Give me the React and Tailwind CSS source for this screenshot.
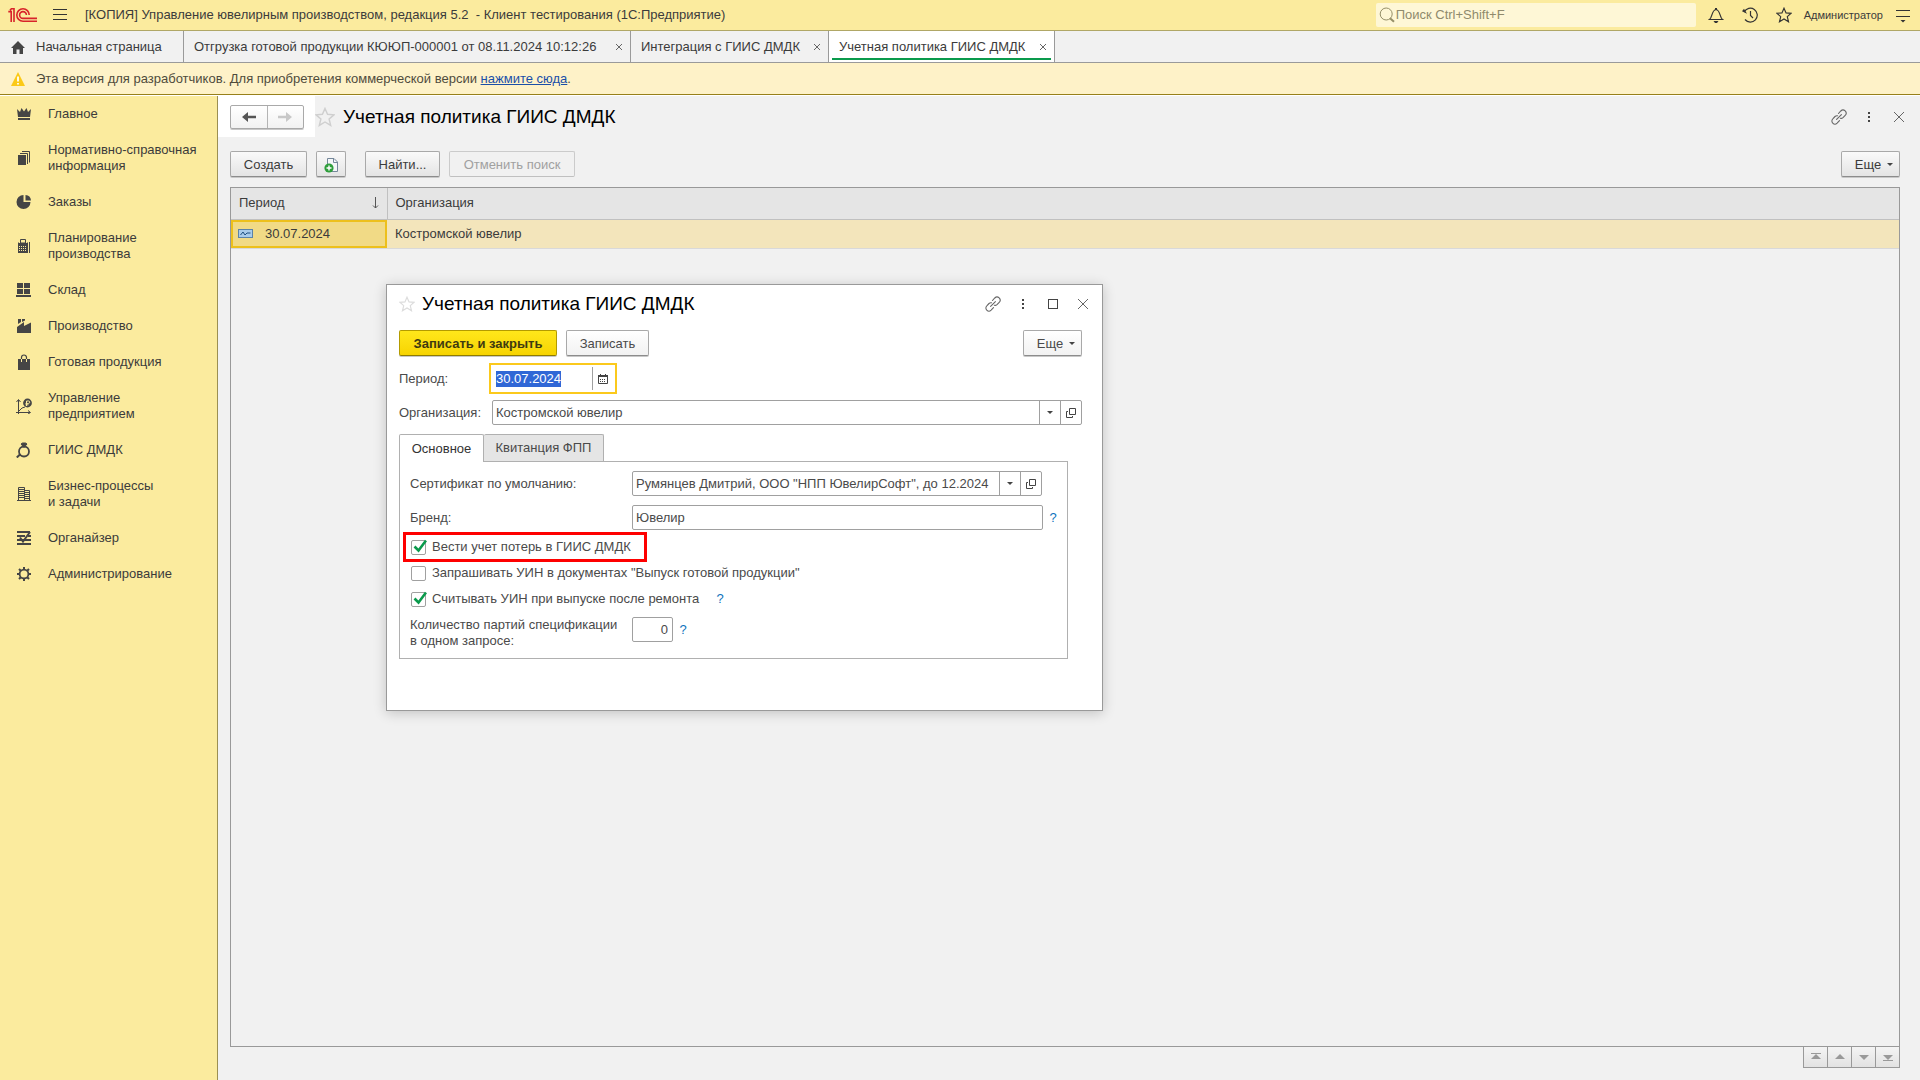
import { useEffect, useRef } from "react"
import clsx from "clsx"

/* ---------- icons ---------- */

const Svg = ({ w = 16, h = 16, className, children }) => (
  <svg width={w} height={h} viewBox={`0 0 ${w} ${h}`} fill="none" className={clsx("shrink-0", className)} aria-hidden="true">
    {children}
  </svg>
)

const Logo = () => (
  <Svg w={30} h={16} className="text-[#d8232a]">
    <g stroke="currentColor" strokeWidth="1.6">
      <path d="M0.3 4.6 H3.2 V15 M2 3.4 L3.4 1.8 H6 V15" />
      <path d="M21.2 8 A6.2 6.2 0 1 0 15 14.2 H29" />
      <path d="M18.4 8 A3.4 3.4 0 1 0 15 11.4 H29" />
    </g>
  </Svg>
)

const HomeIcon = () => (
  <Svg>
    <path d="M8 2 L15 9 H13 V15 H9.5 V10.5 H6.5 V15 H3 V9 H1 Z" fill="#454545" />
  </Svg>
)

const WarningIcon = () => (
  <Svg>
    <path d="M8 1 L15 15 H1 Z" fill="#fbc917" />
    <path d="M8 5.5 V10.5 M8 12 V13.6" stroke="#fff" strokeWidth="1.8" />
  </Svg>
)

const StarIcon = ({ size = 18, className }) => (
  <svg width={size} height={size} viewBox="0 0 18 18" fill="none" className={clsx("shrink-0", className)} aria-hidden="true">
    <path
      d="M9 1.3 L11.3 6.6 L17 7.1 L12.7 10.8 L14.1 16.6 L9 13.5 L3.9 16.6 L5.3 10.8 L1 7.1 L6.7 6.6 Z"
      stroke="currentColor"
      strokeWidth="1.3"
    />
  </svg>
)

const SearchIcon = () => (
  <Svg className="text-[#958f68]">
    <circle cx="7.2" cy="7" r="6" stroke="currentColor" />
    <path d="M11 11.2 L15 14.8" stroke="currentColor" strokeWidth="2" />
  </Svg>
)

const BellIcon = () => (
  <Svg>
    <path d="M1.5 12.5 C4.5 10.5 3.5 3 8 2.5 C12.5 3 11.5 10.5 14.5 12.5 Z" stroke="#333" strokeWidth="1.2" />
    <path d="M7 1 H9 V3 H7 Z M5.5 14 H10.5 L9 16 H7 Z" fill="#333" />
  </Svg>
)

const HistoryIcon = () => (
  <Svg>
    <path d="M2.2 5 A6.9 6.9 0 1 1 3 12.5" stroke="#333" strokeWidth="1.2" />
    <path d="M0 4.2 L5 6.8 L2 1.8 Z" fill="#333" />
    <path d="M8.5 4 V8.5 L11 11" stroke="#333" strokeWidth="1.2" />
  </Svg>
)

const ServiceIcon = () => (
  <Svg>
    <path d="M1 3.5 H15 M1 9.5 H15" stroke="#333" />
    <path d="M5.5 13 H10.5 L8 15.5 Z" fill="#333" />
  </Svg>
)

const LinkIcon = () => (
  <Svg>
    <g stroke="#666" strokeWidth="1.1" strokeLinecap="round">
      <path d="M7.5 4.5 L9.8 2 A3 3 0 0 1 14.2 6.3 L12 8.7 A3 3 0 0 1 9.3 9.3" />
      <path d="M6.5 6.8 A3 3 0 0 0 4 7.5 L1.8 9.8 A3 3 0 0 0 6.1 14.2 L8.5 11.7" />
      <path d="M5.6 10.4 L10.4 5.6" />
    </g>
  </Svg>
)

const DotsIcon = () => (
  <Svg>
    <path d="M7 3 H9 V5 H7 Z M7 7 H9 V9 H7 Z M7 11 H9 V13 H7 Z" fill="#444" />
  </Svg>
)

const SquareIcon = () => (
  <Svg>
    <rect x="3.5" y="3.5" width="9" height="9" stroke="#444" />
  </Svg>
)

const CloseIcon = () => (
  <Svg>
    <path d="M3 3 L13 13 M13 3 L3 13" stroke="#666" />
  </Svg>
)

const TabCloseIcon = () => (
  <Svg w={8} h={8}>
    <path d="M1 1 L7 7 M7 1 L1 7" stroke="#666" />
  </Svg>
)

const ArrowIcon = ({ className }) => (
  <Svg className={className}>
    <path d="M1 8 L7 3 V6.8 H15 V9.2 H7 V13 Z" fill="currentColor" />
  </Svg>
)

const CaretIcon = () => (
  <Svg w={6} h={3}>
    <path d="M0 0 H6 L3 3 Z" fill="#444" />
  </Svg>
)

const OpenIcon = () => (
  <Svg w={10} h={10}>
    <path d="M3.5 0.5 H9.5 V6.5 H3.5 Z M2 3.5 H0.5 V9.5 H6.5 V8" stroke="#444" />
  </Svg>
)

const CalendarIcon = () => (
  <Svg w={10} h={10}>
    <path d="M0.5 1.5 H9.5 V9.5 H0.5 Z" stroke="#444" />
    <path d="M0 1 H10 V3 H0 Z M2 0 H3 V1 H2 Z M7 0 H8 V1 H7 Z" fill="#444" />
    <path d="M2 5.5 H8 M2 7.5 H8" stroke="#444" strokeDasharray="1 1" />
  </Svg>
)

const CopyDocIcon = () => (
  <Svg>
    <path d="M4.5 1.5 H11 L14.5 5 V14.5 H4.5 Z" fill="#f4f6f8" stroke="#74879a" />
    <path d="M10.5 1.5 V5.5 H14.5" stroke="#74879a" />
    <circle cx="6" cy="11" r="4.6" fill="#2f9e3c" />
    <path d="M3.5 11 H8.5 M6 8.5 V13.5" stroke="#fff" strokeWidth="1.4" />
  </Svg>
)

const RecordIcon = () => (
  <Svg w={15} h={9}>
    <rect x="0.5" y="0.5" width="14" height="8" fill="#a9cbea" stroke="#5c83a8" />
    <path d="M2.5 6 L5 3 L7 6 L9 4 L12.5 4" stroke="#1f4f80" />
  </Svg>
)

const SortIcon = () => (
  <Svg w={8} h={12}>
    <path d="M4.5 0 V11 M2 8.5 L4.5 11 L7 8.5" stroke="#555" />
  </Svg>
)

const menuIcons = {
  crown: (
    <path d="M1 3 L4 6 L5.5 2 L8 5.5 L10.5 2 L12 6 L15 3 L14 11 H2 Z M2 12 H14 V14 H2 Z" fill="#454545" />
  ),
  docs: (
    <>
      <path d="M2 5 H10 V15 H2 Z" fill="#454545" />
      <path d="M4 3.5 H11.5 V14 M6 1.5 H13.5 V12.5" stroke="#454545" />
    </>
  ),
  pie: (
    <path d="M7.5 1 V8 H14.5 A7 7 0 1 1 7.5 1 Z M9.5 1 A6 6 0 0 1 15 6.5 H9.5 Z" fill="#454545" />
  ),
  calc: (
    <>
      <path d="M4.5 1.5 H9.5 V5 H4.5 Z M2.5 5.5 V4.5 M11.5 5.5 V4.5 M13.5 4 V15" stroke="#454545" />
      <path d="M2 5 H12 V15 H2 Z" fill="#454545" />
      <path d="M3 8.5 H11 M3 10.5 H11 M3 12.5 H11" stroke="#fbeb9e" strokeDasharray="1 1" />
    </>
  ),
  store: (
    <path d="M1 1 H7 V6 H1 Z M8 1 H14 V6 H8 Z M1 7 H7 V12 H1 Z M8 7 H14 V12 H8 Z M0 13 H15 V15 H0 Z" fill="#454545" />
  ),
  factory: (
    <path d="M2 1 H5 V4 L2 6 Z M6 1 H9 V2.5 L6 4 Z M1 15 V9 L8 4 V8 L15 4.5 V15 Z" fill="#454545" />
  ),
  bag: (
    <>
      <path d="M2 5 H14 V16 H2 Z" fill="#454545" />
      <path d="M5.5 7 V3.5 A2.5 2.5 0 0 1 10.5 3.5 V7" stroke="#454545" strokeWidth="1.2" />
      <path d="M5.5 5 V8 M10.5 5 V8" stroke="#fbeb9e" />
    </>
  ),
  chart: (
    <>
      <path d="M2.5 2 V16 M0 14.5 H14 M0.5 4 L2.5 1.5 L4.5 4 M12 12.5 L14.5 14.5 L12 16 M3 13 L6 10 L9 9" stroke="#454545" />
      <circle cx="11.5" cy="5" r="4.4" fill="#454545" />
      <path d="M10.5 8 V3 H12.5 A1.2 1.2 0 0 1 12.5 5.4 H9.5 M9.5 6.8 H12.5" stroke="#fbeb9e" />
    </>
  ),
  ring: (
    <>
      <circle cx="8" cy="9.5" r="5" stroke="#454545" strokeWidth="1.8" />
      <path d="M5 2 L6.5 1 H9.5 L11 2 L8 5.5 Z" fill="#454545" stroke="#454545" />
      <path d="M4.5 12 L0.8 15.5" stroke="#454545" strokeWidth="2" />
    </>
  ),
  building: (
    <>
      <path d="M2.5 1.5 H8.5 V14.5 H2.5 Z M8.5 4.5 H13.5 V14.5 H8.5 Z M1 14.5 H15" stroke="#454545" />
      <path d="M3 3.5 H8 M3 5.5 H8 M3 7.5 H8 M3 9.5 H8 M3 11.5 H8 M9 6.5 H13 M9 8.5 H13 M9 10.5 H13 M9 12.5 H13" stroke="#454545" />
    </>
  ),
  organizer: (
    <>
      <path d="M1 2 H14 M1 6 H9 M1 10 H15 M1 14 H15 M12 6 H15" stroke="#454545" strokeWidth="2" />
      <path d="M4 7.5 L7 11.5 L14 2" stroke="#454545" strokeWidth="2" />
    </>
  ),
  gear: (
    <>
      <circle cx="8" cy="8" r="4.4" stroke="#454545" strokeWidth="1.8" />
      <path
        d="M8 1 V3.5 M8 12.5 V15 M1 8 H3.5 M12.5 8 H15 M3 3 L4.8 4.8 M11.2 11.2 L13 13 M13 3 L11.2 4.8 M4.8 11.2 L3 13"
        stroke="#454545"
        strokeWidth="2"
      />
    </>
  ),
}

/* ---------- data ---------- */

const menu = [
  { icon: "crown", title: "Главное" },
  { icon: "docs", title: "Нормативно-справочная информация" },
  { icon: "pie", title: "Заказы" },
  { icon: "calc", title: "Планирование производства" },
  { icon: "store", title: "Склад" },
  { icon: "factory", title: "Производство" },
  { icon: "bag", title: "Готовая продукция" },
  { icon: "chart", title: "Управление предприятием" },
  { icon: "ring", title: "ГИИС ДМДК" },
  { icon: "building", title: "Бизнес-процессы и\u00a0задачи" },
  { icon: "organizer", title: "Органайзер" },
  { icon: "gear", title: "Администрирование" },
]

const tabs = [
  { title: "Отгрузка готовой продукции КЮЮП-000001 от 08.11.2024 10:12:26", width: "w-[447px]" },
  { title: "Интеграция с ГИИС ДМДК", width: "w-[198px]" },
  { title: "Учетная политика ГИИС ДМДК", width: "w-[226px]", active: true },
]

const scrollButtons = [
  { label: "В начало", path: "M8 5 L13 10 H3 Z", bar: "M3 4.5 H13" },
  { label: "Вверх", path: "M8 5 L13 10 H3 Z" },
  { label: "Вниз", path: "M8 11 L13 6 H3 Z" },
  { label: "В конец", path: "M8 11 L13 6 H3 Z", bar: "M3 11.5 H13" },
]

/* ---------- controls ---------- */

const Button = ({ className, children, ...props }) => (
  <button
    type="button"
    className={clsx(
      "flex h-[26px] items-center justify-center rounded-xs border border-[#a9a9a9] border-b-[#8c8c8c] bg-linear-to-b pt-px shadow-[0_1px_0_#c8c8c8]",
      className
    )}
    {...props}
  >
    {children}
  </button>
)

const IconButton = ({ label, children }) => (
  <button type="button" aria-label={label} className="flex items-center justify-center">
    {children}
  </button>
)

const Help = () => (
  <button type="button" aria-label="Справка" className="w-2 text-center text-[#0f75bd]">
    ?
  </button>
)

const PickerField = ({ id, value, className }) => (
  <div className={clsx("flex h-[25px] rounded-xs border border-[#a0a0a0] bg-white", className)}>
    <input id={id} defaultValue={value} className="min-w-0 flex-1 px-[3px] outline-none" />
    <button type="button" aria-label="Выбрать" className="flex w-[21px] items-center justify-center border-l border-[#a0a0a0]">
      <CaretIcon />
    </button>
    <button type="button" aria-label="Открыть" className="flex w-[21px] items-center justify-center border-l border-[#a0a0a0]">
      <OpenIcon />
    </button>
  </div>
)

const Checkbox = ({ label, checked, className }) => (
  <label className={clsx("flex items-center gap-[6px]", className)}>
    <span className="relative flex">
      <input
        type="checkbox"
        defaultChecked={checked}
        className="peer size-[15px] appearance-none rounded-xs border border-[#a0a0a0] bg-white"
      />
      <Svg className="pointer-events-none absolute bottom-0 left-0 hidden peer-checked:block">
        <path d="M3.5 7.5 L7.5 11.5 L15 1.5" stroke="#0a9a4c" strokeWidth="2.6" />
      </Svg>
    </span>
    {label}
  </label>
)

/* ---------- page parts ---------- */

const TopBar = () => (
  <header className="flex h-[31px] items-center border-b border-[#b0a766] bg-[#fbeb9e] pl-2 pr-[9px]">
    <Logo />
    <button type="button" aria-label="Меню функций" className="ml-[14px]">
      <Svg>
        <path d="M1 2.5 H15 M1 7.5 H15 M1 12.5 H15" stroke="#333" />
      </Svg>
    </button>
    <h1 className="ml-[17px] flex-1 truncate whitespace-pre">
      [КОПИЯ] Управление ювелирным производством, редакция 5.2{"  "}- Клиент тестирования (1С:Предприятие)
    </h1>
    <label className="flex h-6 w-80 items-center gap-px rounded-xs bg-[#fef7d6] px-[3px]">
      <SearchIcon />
      <input aria-label="Поиск" placeholder="Поиск Ctrl+Shift+F" className="min-w-0 flex-1 outline-none placeholder:text-[#8f8a6c]" />
    </label>
    <div className="ml-3 flex items-center gap-[18px]">
      <IconButton label="Уведомления"><BellIcon /></IconButton>
      <IconButton label="История"><HistoryIcon /></IconButton>
      <IconButton label="Избранное"><StarIcon size={16} className="text-[#333]" /></IconButton>
    </div>
    <button type="button" className="ml-3 text-[11px]">Администратор</button>
    <button type="button" aria-label="Сервис" className="ml-3">
      <ServiceIcon />
    </button>
  </header>
)

const TabBar = () => (
  <nav className="flex h-8 border-b border-[#9a9a9a] bg-[#f1f1f1]">
    <a href="#home" className="flex w-[184px] items-center gap-[10px] border-r border-[#9a9a9a] pl-[10px]">
      <HomeIcon />
      Начальная страница
    </a>
    {tabs.map((tab) => (
      <div
        key={tab.title}
        className={clsx(
          "relative flex items-center justify-between border-r border-[#9a9a9a] pl-[10px] pr-[7px]",
          tab.width,
          tab.active && "bg-white"
        )}
      >
        <a href="#tab">{tab.title}</a>
        <IconButton label="Закрыть"><TabCloseIcon /></IconButton>
        {tab.active && <span className="absolute inset-x-[3px] bottom-[2px] h-[2px] bg-[#0a9a4c]" />}
      </div>
    ))}
  </nav>
)

const Sidebar = () => (
  <nav className="w-[218px] shrink-0 border-r border-[#9b8f52] bg-[#fbeb9e]">
    {menu.map((item) => (
      <a key={item.title} href="#section" className="flex items-center gap-4 py-[10px] pl-4 pr-3 leading-4">
        <Svg>{menuIcons[item.icon]}</Svg>
        <span className={clsx("flex-1", item.icon === "building" && "pr-10")}>{item.title}</span>
      </a>
    ))}
  </nav>
)

const grayButton = "from-[#fafafa] to-[#e4e4e4]"
const whiteButton = "from-white to-[#f2f2f2]"

const ListForm = () => (
  <main className="flex min-w-0 flex-1 flex-col bg-[#f1f1f1] pb-3">
    <div className="flex items-center pr-[13px]">
      <div className="flex h-[41px] w-[97px] items-center bg-white pl-3">
        <div className="flex h-6 w-[74px] rounded-xs border border-[#a9a9a9] bg-linear-to-b from-white to-[#f2f2f2] shadow-[0_1px_0_#c8c8c8]">
          <button type="button" aria-label="Назад" className="flex flex-1 items-center justify-center">
            <ArrowIcon className="text-[#555]" />
          </button>
          <button type="button" aria-label="Вперед" className="flex flex-1 items-center justify-center border-l border-[#b4b4b4]">
            <ArrowIcon className="rotate-180 text-[#c8c8c8]" />
          </button>
        </div>
      </div>
      <StarIcon size={20} className="text-[#cfcfcf]" />
      <h2 className="ml-2 flex-1 text-[19px] text-black">Учетная политика ГИИС ДМДК</h2>
      <div className="flex gap-[14px]">
        <IconButton label="Получить ссылку"><LinkIcon /></IconButton>
        <IconButton label="Ещё"><DotsIcon /></IconButton>
        <IconButton label="Закрыть"><CloseIcon /></IconButton>
      </div>
    </div>

    <div className="mt-[14px] flex items-center pl-3 pr-5">
      <Button className={clsx("w-[77px]", grayButton)}>Создать</Button>
      <Button aria-label="Создать копированием" className={clsx("ml-[9px] w-[30px]", grayButton)}>
        <CopyDocIcon />
      </Button>
      <Button className={clsx("ml-[19px] w-[75px]", grayButton)}>Найти...</Button>
      <Button disabled className="ml-[9px] w-[126px] border-[#cbcbcb] border-b-[#c0c0c0] text-[#a0a0a0] shadow-none">
        Отменить поиск
      </Button>
      <Button className={clsx("ml-auto w-[59px] gap-[6px] pl-[7px]", grayButton)}>
        Еще <CaretIcon />
      </Button>
    </div>

    <div className="ml-3 mr-5 mt-[10px] flex-1 border border-[#999]">
      <table className="w-full table-fixed border-collapse">
        <thead>
          <tr className="h-[31px] border-b border-[#c0c0c0] bg-[#e5e5e5] text-left">
            <th className="w-[156px] border-r border-[#c0c0c0] px-2 font-normal">
              <div className="flex items-center justify-between">
                Период
                <SortIcon />
              </div>
            </th>
            <th className="px-2 font-normal">Организация</th>
          </tr>
        </thead>
        <tbody>
          <tr className="h-[29px] border-b border-[#d9d9d9] bg-[#f3e5bb]">
            <td className="p-0">
              <div className="flex h-7 items-center gap-3 border-2 border-[#edc01c] bg-[#f1da86] pl-[5px]">
                <RecordIcon />
                30.07.2024
              </div>
            </td>
            <td className="px-2">Костромской ювелир</td>
          </tr>
        </tbody>
      </table>
    </div>

    <div className="mr-5 flex justify-end">
      <div className="-mt-px flex border border-l-0 border-[#999] bg-linear-to-b from-[#f4f4f4] to-[#e2e2e2]">
        {scrollButtons.map((item) => (
          <button
            key={item.label}
            type="button"
            aria-label={item.label}
            className="flex h-5 w-6 items-center justify-center border-l border-[#999]"
          >
            <Svg>
              <path d={item.path} fill="#999" />
              {item.bar && <path d={item.bar} stroke="#999" />}
            </Svg>
          </button>
        ))}
      </div>
    </div>
  </main>
)

const PolicyDialog = () => {
  const periodRef = useRef(null)

  // the period is ready to be overtyped when the window opens
  useEffect(() => {
    periodRef.current.focus()
    periodRef.current.select()
  }, [])

  return (
    <section
      role="dialog"
      aria-label="Учетная политика ГИИС ДМДК"
      className="absolute left-[386px] top-[284px] w-[717px] border border-[#999] bg-white pb-[51px] pl-3 text-[#4a4a4a] shadow-[0_2px_12px_rgba(0,0,0,0.2)]"
    >
      <div className="flex h-[37px] items-center pr-[11px]">
        <StarIcon size={16} className="text-[#dcdcdc]" />
        <h2 className="ml-[7px] flex-1 text-[19px] text-black">Учетная политика ГИИС ДМДК</h2>
        <div className="flex gap-[14px]">
          <IconButton label="Получить ссылку"><LinkIcon /></IconButton>
          <IconButton label="Ещё"><DotsIcon /></IconButton>
          <IconButton label="Развернуть"><SquareIcon /></IconButton>
          <IconButton label="Закрыть"><CloseIcon /></IconButton>
        </div>
      </div>

      <div className="mt-2 flex gap-[9px] pr-5">
        <Button className="w-[158px] border-[#b39b00] border-b-[#8f7c00] from-[#ffe71a] to-[#f7d400] font-bold text-[#3f3a10]">
          Записать и закрыть
        </Button>
        <Button className={clsx("w-[83px]", whiteButton)}>Записать</Button>
        <Button className={clsx("ml-auto w-[59px] gap-[6px] pl-[7px]", whiteButton)}>
          Еще <CaretIcon />
        </Button>
      </div>

      <div className="mt-[7px] flex items-center">
        <label htmlFor="period" className="w-[90px]">Период:</label>
        <div className="flex h-[31px] w-[128px] items-center border-2 border-[#fbc91c]">
          <input
            id="period"
            ref={periodRef}
            defaultValue="30.07.2024"
            className="w-[101px] pl-[5px] outline-none selection:bg-[#3067d6] selection:text-white"
          />
          <button type="button" aria-label="Календарь" className="flex h-[23px] flex-1 items-center border-l border-[#a0a0a0] pl-[5px]">
            <CalendarIcon />
          </button>
        </div>
      </div>

      <div className="mt-[6px] flex items-center pr-5">
        <label htmlFor="organization" className="w-[93px]">Организация:</label>
        <PickerField id="organization" value="Костромской ювелир" className="flex-1" />
      </div>

      <div role="tablist" className="mt-[9px] flex">
        <button
          type="button"
          role="tab"
          aria-selected="true"
          className="relative z-10 -mb-px h-7 w-[85px] rounded-t-xs border border-b-0 border-[#b0b0b0] bg-white text-[#333]"
        >
          Основное
        </button>
        <button
          type="button"
          role="tab"
          aria-selected="false"
          className="h-[27px] w-[120px] rounded-t-xs border border-b-0 border-l-0 border-[#b0b0b0] bg-[#e5e5e5]"
        >
          Квитанция ФПП
        </button>
      </div>

      <div className="mr-[34px] border border-[#b0b0b0] pb-[9px] pl-[10px] pt-[9px]">
        <div className="flex items-center">
          <label htmlFor="certificate" className="w-[222px]">Сертификат по умолчанию:</label>
          <PickerField id="certificate" value={'Румянцев Дмитрий, ООО "НПП ЮвелирСофт", до 12.2024'} className="w-[410px]" />
        </div>
        <div className="mt-[9px] flex items-center">
          <label htmlFor="brand" className="w-[222px]">Бренд:</label>
          <input id="brand" defaultValue="Ювелир" className="mr-[6px] h-[25px] w-[411px] rounded-xs border border-[#a0a0a0] px-[3px] outline-none" />
          <Help />
        </div>
        <div className="-ml-[7px] mt-[2px] flex">
          <Checkbox checked label="Вести учет потерь в ГИИС ДМДК" className="h-[30px] w-[244px] border-3 border-[#fe0000] pl-[5px]" />
        </div>
        <Checkbox label={'Запрашивать УИН в документах "Выпуск готовой продукции"'} className="h-[22px] pl-px" />
        <div className="mt-1 flex h-[22px] items-center gap-[10px]">
          <Checkbox checked label="Считывать УИН при выпуске после ремонта" className="w-[296px] pl-px" />
          <Help />
        </div>
        <div className="mt-[7px] flex items-start">
          <label htmlFor="batches" className="w-[222px] leading-4">
            Количество партий спецификации
            <br />
            в одном запросе:
          </label>
          <div className="flex items-center gap-[6px]">
            <input id="batches" defaultValue="0" className="h-[25px] w-[41px] rounded-xs border border-[#a0a0a0] px-1 text-right outline-none" />
            <Help />
          </div>
        </div>
      </div>
    </section>
  )
}

const App = () => (
  <div className="relative flex min-h-screen flex-col bg-[#f1f1f1] font-['Liberation_Sans',Arial,sans-serif] text-[13px] leading-4 text-[#3b3b3b]">
    <TopBar />
    <TabBar />
    <div className="flex h-8 items-center gap-[10px] border-b border-[#97801a] bg-[#fef2c8] pl-[10px] text-[#4f4b3c]">
      <WarningIcon />
      <p>
        Эта версия для разработчиков. Для приобретения коммерческой версии{" "}
        <a href="#buy" className="text-[#1a4fa8] underline">нажмите сюда</a>.
      </p>
    </div>
    <div className="flex flex-1 border-t border-white">
      <Sidebar />
      <ListForm />
    </div>
    <PolicyDialog />
  </div>
)

export default App
